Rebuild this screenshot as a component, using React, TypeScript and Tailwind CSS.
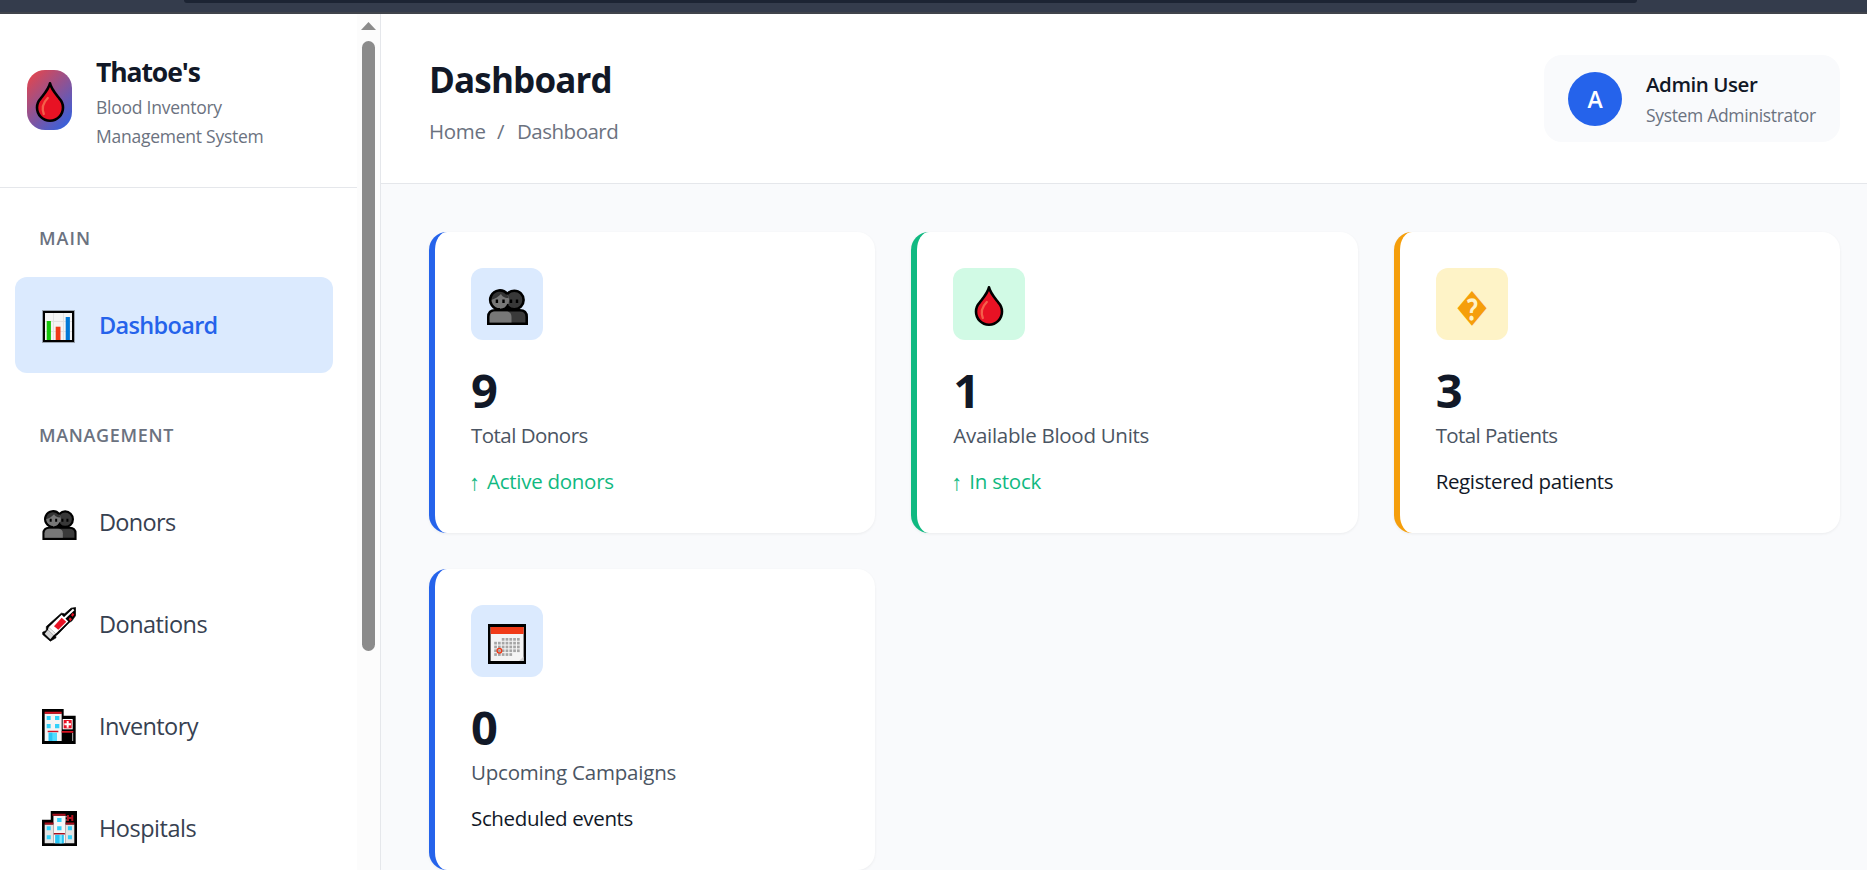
import React from "react";

type IconProps = { className?: string };

function DropIcon({ className }: IconProps) {
  return (
    <svg viewBox="0 0 30 42" className={className}>
      <path
        d="M15 2.2C14 7.5 9.500 12.600 5.600 17.600A13 13 0 0 0 2 26.500C2 34 7.800 39.700 15 39.700S28 34 28 26.500A13 13 0 0 0 24.400 17.600C20.500 12.600 16 7.500 15 2.200Z"
        fill="#e81224"
        stroke="#000"
        strokeWidth="2.6"
        strokeLinejoin="round"
      />
      <path d="M12.8 17C8.6 21.2 6 25.8 8.8 33" fill="none" stroke="#f4604a" strokeWidth="2.3" strokeLinecap="round" />
    </svg>
  );
}

function PeopleIcon({ className }: IconProps) {
  return (
    <svg viewBox="0 0 41 36" className={className}>
      <circle cx="27.300" cy="11" r="9.300" fill="#383838" stroke="#000" strokeWidth="2.600" />
      <path d="M1.300 34.700V28c0-4.500 3-6.700 7-6.700h24.400c4 0 7 2.200 7 6.700v6.700Z" fill="#3a3a3a" stroke="#000" strokeWidth="2.600" />
      <path d="M2.600 33.400V28c0-3.600 2.200-5.400 5.700-5.400H19c3.600 0 5.500 1.800 5.500 5.400v5.400Z" fill="#777" />
      <circle cx="13" cy="11" r="9.200" fill="#777" />
      <path d="M4 11C3 4 10 1 15 2.500C19 3 21 6 21.500 9C17 9 15 7 14 5C11 8 8 10 4 11Z" fill="#333" />
      <path d="M13 20.400A9.500 9.500 0 1 1 20.200 5" fill="none" stroke="#000" strokeWidth="2.600" />
      <path d="M13 20.400C17 20.400 20 18 21 15" fill="none" stroke="#000" strokeWidth="1.500" />
      <path d="M9.900 10.500v3.500M16.500 10.500v3.500M24 10.500v3.500M30 10.500v3.500" stroke="#000" strokeWidth="2.400" />
      <path d="M15 21.500L20.500 16L26 21.500Z" fill="#000" />
    </svg>
  );
}

function ChartIcon({ className }: IconProps) {
  return (
    <svg viewBox="0 0 33 33" className={className}>
      <rect width="33" height="33" fill="#7d838c" opacity=".7" />
      <rect x="1" y="1" width="31" height="31" fill="#000" />
      <rect x="3" y="3" width="27" height="27" fill="#f4f4f4" />
      <path d="M3 11.500H30M3 21.500H30M11.500 3V30M21.500 3V30" stroke="#e2e2e2" />
      <rect x="4.700" y="11" width="4.200" height="19" fill="#16c60c" />
      <rect x="13.700" y="16.700" width="4.800" height="13.300" fill="#f03a17" />
      <rect x="23.700" y="7" width="4.200" height="23" fill="#0078d7" />
    </svg>
  );
}

function SyringeIcon({ className }: IconProps) {
  return (
    <svg viewBox="0 0 102 104" className={className}>
      <path
        d="M58 18L68 20L87 3L101 1L101 25L90 41L82 46L47 82L41 86L42 92L25 102L2 82L2 75L13 70L13 58Z"
        fill="#000"
        stroke="#000"
        strokeWidth="2"
        strokeLinejoin="round"
      />
      <path d="M20 60L59 23L79 43L41 80Z" fill="#fff" />
      <path d="M36 57L59 32L73 44L49 68Z" fill="#e81224" />
      <path d="M8 80L18 68L35 84L25 96Z" fill="#d6d6d6" />
      <path d="M18 68L20 60L41 80L35 84Z" fill="#f2f2f2" />
      <path d="M67 33L95 7" stroke="#fff" strokeWidth="6" />
      <path d="M92 17L97 22L92 29L87 24ZM84 30L90 36L85 42L80 36Z" fill="#e81224" />
    </svg>
  );
}

function InventoryIcon({ className }: IconProps) {
  return (
    <svg viewBox="0 0 102 105" className={className}>
      <path d="M0 0H65V20H101V105H0Z" fill="#000" />
      <path d="M8 14H59V96H8Z" fill="#f4f4f4" />
      <path d="M8 8H59V14H8ZM17 65H49V70H17ZM59 66H94V71H59Z" fill="#d81222" />
      <path d="M14 21H26V33H14ZM39 21H52V33H39ZM14 45H26V58H14ZM39 45H52V58H39Z" fill="#32d1fa" />
      <path d="M20 71H45V96H20Z" fill="#4fdcff" />
      <path d="M20 71H31V96H20Z" fill="#28c4f4" />
      <path d="M62 30H92V61H62Z" fill="#fff" />
      <path d="M65 33H89V58H65Z" fill="#e81224" />
      <path d="M77 36V56M67 46H87" stroke="#fff" strokeWidth="6" />
      <path d="M92 72V96" stroke="#bbb" strokeWidth="3" />
    </svg>
  );
}

function HospitalIcon({ className }: IconProps) {
  return (
    <svg viewBox="0 0 104 104" className={className}>
      <path d="M26 0H104V104H0V26H26Z" fill="#000" />
      <path d="M8 40H34V96H8ZM70 40H96V96H70Z" fill="#e4e4e4" />
      <path d="M34 14H70V96H34Z" fill="#f6f6f6" />
      <path d="M31 8H70V14H31ZM8 34H34V40H8ZM70 34H96V40H70ZM35 65H68V70H35Z" fill="#a80f1c" />
      <path d="M45 21H58V33H45ZM45 45H58V57H45ZM14 45H26V57H14ZM14 72H26V84H14ZM77 45H89V57H77ZM77 72H89V84H77Z" fill="#32d1fa" />
      <path d="M39 71H65V96H39Z" fill="#28c4f4" />
      <path d="M52 71H59V96H52Z" fill="#7fe8ff" />
      <path d="M77 12V30M90 12V30M77 21H90" stroke="#b51220" strokeWidth="6" />
      <path d="M70 17H73M70 27H73" stroke="#fff" strokeWidth="3" />
    </svg>
  );
}

const calendarDots = [0, 1, 2, 3, 4].flatMap((row) =>
  [0, 1, 2, 3, 4, 5, 6]
    .filter((col) => !(row === 0 && col < 2) && !(row === 4 && col > 4))
    .map((col) => ({ x: 6.2 + col * 3.8, y: 14 + row * 3.8 })),
);

function CalendarIcon({ className }: IconProps) {
  return (
    <svg viewBox="0 0 38 40" className={className}>
      <rect width="38" height="40" fill="#000" />
      <rect x="2.600" y="3" width="33" height="34" fill="#f4f4f4" />
      <rect x="2.600" y="3" width="33" height="7" fill="#f03a17" />
      {calendarDots.map((d) => (
        <rect key={`${d.x}-${d.y}`} x={d.x} y={d.y} width="2.700" height="2.700" fill="#a5a5a5" />
      ))}
      <circle cx="11.400" cy="26.700" r="2.300" fill="none" stroke="#f03a17" strokeWidth="1.400" />
      <path d="M35.600 32.500V37H31Z" fill="#d0d0d0" />
    </svg>
  );
}

const navItems = [
  { label: "Donors", Icon: PeopleIcon, size: "w-[35px] h-[30px] mt-[5px]", track: "tracking-[-0.69px]" },
  { label: "Donations", Icon: SyringeIcon, size: "w-[34px] h-[35px] mt-[1px]", track: "tracking-[-0.51px]" },
  { label: "Inventory", Icon: InventoryIcon, size: "w-[34px] h-[35px] mt-[1px]", track: "tracking-[-0.6px]" },
  { label: "Hospitals", Icon: HospitalIcon, size: "w-[35px] h-[35px] mt-[1px]", track: "tracking-[-0.49px]" },
];

function Sidebar() {
  return (
    <aside className="flex w-[381px] shrink-0 border-r border-[#e5e7eb] bg-white">
      <div className="min-w-0 flex-1 overflow-hidden">
        <div className="flex h-[174px] items-center gap-6 border-b border-[#e5e7eb] pl-[27px]">
          <div className="mb-[2px] flex h-[60px] w-[45px] items-center justify-center rounded-[18px] bg-linear-[135deg,#ef4444,#2563eb]">
            <DropIcon className="mt-1 h-[42px] w-[30px]" />
          </div>
          <div className="pt-1">
            <div className="mb-1 text-[26.5px] leading-[34px] font-bold tracking-[-1.1px] text-[#111827]">Thatoe's</div>
            <div className="text-[17.5px] leading-[29px] tracking-[-0.25px] text-[#6b7280]">Blood Inventory</div>
            <div className="text-[17.5px] leading-[29px] tracking-[-0.25px] text-[#6b7280]">Management System</div>
          </div>
        </div>
        <nav className="pr-6 pl-[15px]">
          <div className="mt-[35px] mb-6 pl-6 text-[18px] leading-[30px] font-semibold tracking-[1px] text-[#6b7280]">MAIN</div>
          <a className="flex h-24 items-center rounded-xl bg-[#dbeafe] pl-[27px] text-[23.5px] font-semibold tracking-[-0.67px] text-[#2563eb]">
            <ChartIcon className="mt-[3px] h-[33px] w-[33px]" />
            <span className="ml-6 pt-[2px]">Dashboard</span>
          </a>
          <div className="mt-[47px] mb-6 pl-6 text-[18px] leading-[30px] font-semibold tracking-[0.66px] text-[#6b7280]">MANAGEMENT</div>
          <div className="flex flex-col gap-1.5">
            {navItems.map(({ label, Icon, size, track }) => (
              <a key={label} className="flex h-24 items-center pl-[27px] text-[23.5px] text-[#374151]">
                <span className="w-[57px] shrink-0">
                  <Icon className={size} />
                </span>
                <span className={`pt-[2px] ${track}`}>{label}</span>
              </a>
            ))}
          </div>
        </nav>
      </div>
      <div className="flex w-[23px] flex-col items-center bg-[#fcfcfc] pt-2">
        <svg viewBox="0 0 15 8" className="h-2 w-[15px]">
          <path d="M7.500 0L15 8H0Z" fill="#8b8b8b" />
        </svg>
        <div className="mt-[11px] h-[610px] w-[13px] rounded-full bg-[#8b8b8b]" />
      </div>
    </aside>
  );
}

const stats = [
  {
    value: "9",
    label: "Total Donors",
    note: "Active donors",
    up: true,
    border: "border-[#2563eb]",
    tile: "bg-[#dbeafe]",
    labelTrack: "tracking-[-0.53px]",
    noteTrack: "tracking-[-0.27px]",
    icon: <PeopleIcon className="mt-[6px] h-9 w-[41px]" />,
  },
  {
    value: "1",
    label: "Available Blood Units",
    note: "In stock",
    up: true,
    border: "border-[#10b981]",
    tile: "bg-[#d1fae5]",
    labelTrack: "tracking-[-0.28px]",
    noteTrack: "tracking-[-0.24px]",
    icon: <DropIcon className="mt-[3px] h-[42px] w-[30px]" />,
  },
  {
    value: "3",
    label: "Total Patients",
    note: "Registered patients",
    up: false,
    border: "border-[#f59e0b]",
    tile: "bg-[#fef3c7]",
    labelTrack: "tracking-[-0.6px]",
    noteTrack: "tracking-[-0.36px]",
    icon: (
      <span className="mt-[3px] scale-x-[0.88] scale-y-[1.06] text-[36px] leading-none font-light text-[#f59e0b]">�</span>
    ),
  },
  {
    value: "0",
    label: "Upcoming Campaigns",
    note: "Scheduled events",
    up: false,
    border: "border-[#2563eb]",
    tile: "bg-[#dbeafe]",
    labelTrack: "tracking-[-0.2px]",
    noteTrack: "tracking-[-0.36px]",
    icon: <CalendarIcon className="mt-[6px] h-10 w-[38px]" />,
  },
];

function StatCard({ stat }: { stat: (typeof stats)[number] }) {
  return (
    <div className={`h-[301px] rounded-[18px] border-l-[6px] bg-white p-9 shadow-[0_1px_3px_rgba(0,0,0,0.06)] ${stat.border}`}>
      <div className={`flex h-[72px] w-[72px] items-center justify-center rounded-xl ${stat.tile}`}>{stat.icon}</div>
      <div className="mt-6 text-[47px] leading-[52px] font-bold text-[#111827]">{stat.value}</div>
      <div className={`mt-[2px] text-[20.5px] leading-[34px] text-[#4b5563] ${stat.labelTrack}`}>{stat.label}</div>
      <div className={`mt-3 flex text-[20.5px] leading-[34px] ${stat.up ? "text-[#10b981]" : "text-[#111827]"}`}>
        {stat.up && <span className="-ml-[2px] w-[18px] shrink-0 font-['Noto_Sans'] text-[22px]">↑</span>}
        <span className={stat.noteTrack}>{stat.note}</span>
      </div>
    </div>
  );
}

export default function App() {
  return (
    <div className="flex h-[870px] w-[1867px] flex-col overflow-hidden bg-[#f9fafc] font-['Open_Sans','Noto_Sans',sans-serif]">
      <div className="h-[14px] shrink-0 border-b-2 border-[#40444b] bg-[#343c4c] pr-[230px] pl-[184px]">
        <div className="h-[3px] rounded-b-[12px] bg-[#1c2433]" />
      </div>
      <div className="flex min-h-0 flex-1">
        <Sidebar />
        <main className="min-w-0 flex-1">
          <header className="flex h-[170px] justify-between border-b border-[#e5e7eb] bg-white pr-[27px] pl-12">
            <div className="pt-[41px]">
              <h1 className="text-[35px] leading-[50px] font-bold tracking-[-0.84px] text-[#111827]">Dashboard</h1>
              <div className="mt-[9px] flex text-[20.5px] leading-[34px] text-[#6b7280]">
                <span className="w-[68px] tracking-[-0.3px]">Home</span>
                <span className="w-5">/</span>
                <span className="tracking-[-0.5px]">Dashboard</span>
              </div>
            </div>
            <div className="mt-[41px] flex h-[87px] w-[296px] items-center rounded-[18px] bg-[#f9fafc] pl-6">
              <div className="flex h-[54px] w-[54px] shrink-0 items-center justify-center rounded-full bg-[#2563eb] pt-[2px] text-[23px] font-semibold text-white">A</div>
              <div className="ml-6 whitespace-nowrap">
                <div className="text-[20.5px] leading-[34px] font-semibold tracking-[-0.45px] text-[#111827]">Admin User</div>
                <div className="text-[17.5px] leading-[29px] tracking-[-0.33px] text-[#6b7280]">System Administrator</div>
              </div>
            </div>
          </header>
          <section className="grid grid-cols-3 gap-9 pt-12 pr-[27px] pl-12">
            {stats.map((s) => (
              <StatCard key={s.label} stat={s} />
            ))}
          </section>
        </main>
      </div>
    </div>
  );
}
